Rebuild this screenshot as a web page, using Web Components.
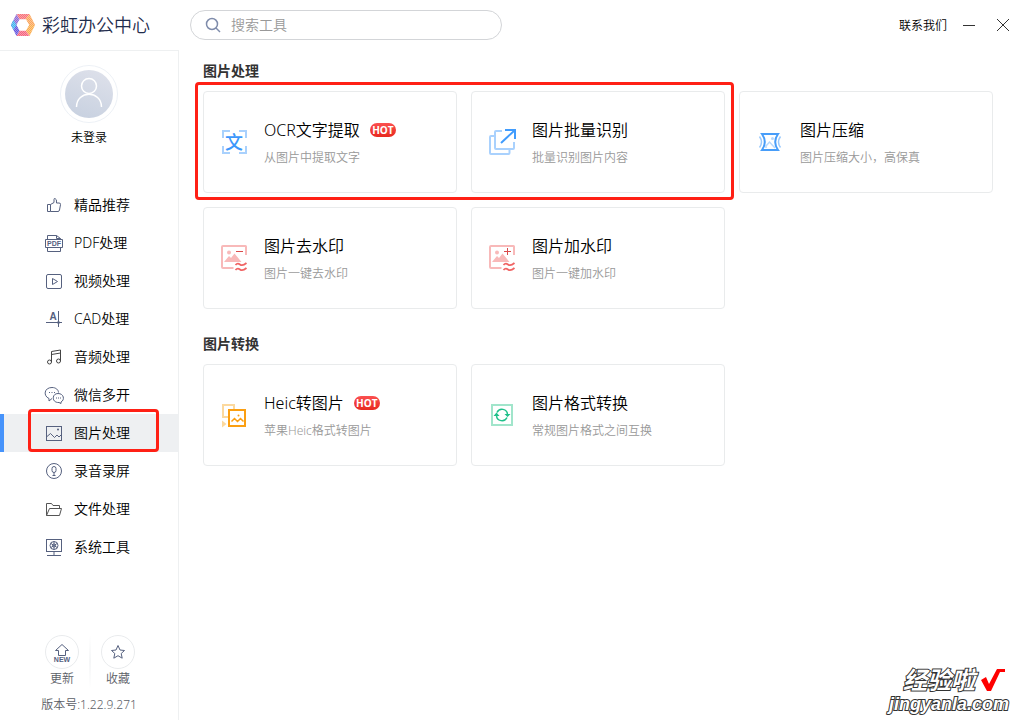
<!DOCTYPE html>
<html lang="zh-CN">
<head>
<meta charset="utf-8">
<meta name="viewport" content="width=device-width, initial-scale=1">
<title>彩虹办公中心</title>
<style>
html, body { margin: 0; background: #fff; }
body { font-family: "Noto Sans", "Noto Sans CJK SC", sans-serif; font-size: 14px; font-weight: 350; color: #000; }
</style>
</head>
<body>
<app-shell>
  <app-brand slot="brand">彩虹办公中心</app-brand>
  <app-toolbar slot="toolbar"></app-toolbar>
  <user-panel slot="side">未登录</user-panel>
  <side-nav slot="side">
    <nav-item icon="thumb">精品推荐</nav-item>
    <nav-item icon="pdf">PDF处理</nav-item>
    <nav-item icon="video">视频处理</nav-item>
    <nav-item icon="cad">CAD处理</nav-item>
    <nav-item icon="music">音频处理</nav-item>
    <nav-item icon="wechat">微信多开</nav-item>
    <nav-item icon="image" active marked>图片处理</nav-item>
    <nav-item icon="mic">录音录屏</nav-item>
    <nav-item icon="folder">文件处理</nav-item>
    <nav-item icon="system">系统工具</nav-item>
  </side-nav>
  <side-footer slot="side"></side-footer>
  <tool-section slot="main" heading="图片处理">
    <marked-group>
      <tool-card icon="ocr" hot desc="从图片中提取文字">OCR文字提取</tool-card>
      <tool-card icon="batch" desc="批量识别图片内容">图片批量识别</tool-card>
    </marked-group>
    <tool-card icon="compress" desc="图片压缩大小，高保真">图片压缩</tool-card>
    <tool-card icon="unmark" desc="图片一键去水印">图片去水印</tool-card>
    <tool-card icon="mark" desc="图片一键加水印">图片加水印</tool-card>
  </tool-section>
  <tool-section slot="main" heading="图片转换">
    <tool-card icon="heic" hot desc="苹果Heic格式转图片">Heic转图片</tool-card>
    <tool-card icon="convert" desc="常规图片格式之间互换">图片格式转换</tool-card>
  </tool-section>
  <site-stamp slot="stamp"></site-stamp>
</app-shell>

<script>
const NAV_ICONS = {
  thumb: '<path d="M3.5 9.5h3v7h-3zM6.5 9.5L10 7.5V4.5q0-1.2 1-1q2 .4 1.5 4.5H15q1.8 0 1.5 1.6l-1 5.4q-.3 1.5-1.5 1.5H6.5"/>',
  pdf: '<path d="M3.5 6.5V2.5H12.5L16.5 5.5V6.5M12.5 2.5v3h4M3.5 14.5v4h13v-4M1.5 6.5h17v8h-17z"/><text x="10" y="13" text-anchor="middle" font-size="7" font-weight="700">PDF</text>',
  video: '<rect x="2.5" y="3.5" width="15" height="14" rx="1.5"/><path d="M8.5 7.5v6l5-3z"/>',
  cad: '<path d="M2 13.5h16M14.5 2v16"/><circle cx="14.5" cy="13.5" r="1" class="f"/><text x="9" y="11" text-anchor="middle" font-size="10" font-weight="700">A</text>',
  music: '<g stroke="#444"><path d="M7.5 15V4.5l9-1.5v11M7.5 7.5l9-1.5"/><circle cx="5.5" cy="15" r="2"/><circle cx="14.5" cy="14" r="2"/></g>',
  wechat: '<path d="M8 13.5L5 16v-2.5C-1 11 0 2.5 8 2.5c4 0 6.5 2.5 6.5 5"/><path d="M14 8.5c6 0 7 6.5 3 8.5v1.5L15 17.5C7.5 18 7.5 8.5 14 8.5z"/><path d="M5 7.5h1M7.5 7.5h1M10 7.5h1M12 13h1M14 13h1M16 13h1"/>',
  image: '<rect x="2.5" y="3.5" width="15" height="14"/><path d="M3 13.5L6.5 10.5l4 4 2.5-2.5 2 2 2-2"/><circle cx="14" cy="6.5" r="1" class="f" stroke="none"/>',
  mic: '<circle cx="10" cy="10" r="7.5"/><rect x="8" y="5.5" width="4" height="6" rx="2"/><path d="M10 11.5v3M8.5 14.5h3"/>',
  folder: '<g stroke="#555"><path d="M2.5 16.5V4.5h5l1.5 2h6.5v3M2.5 16.5l3-7h12l-2 7z"/></g>',
  system: '<rect x="2.5" y="2.5" width="15" height="12"/><circle cx="10" cy="8.5" r="4"/><circle cx="10" cy="8.5" r="1.5"/><path d="M7 6.5l6 4M13 6.5l-6 4M10 4.5v2.5M10 10v2.5M10 14.5v4M3 18.5h14"/>'
};

const PICTURE = '<path d="M26 11V2.5Q26 2 25.5 2H3Q2 2 2 3V23Q2 24 3 24H13.5" stroke="#f8b9b9" stroke-width="2"/><circle cx="9" cy="8.5" r="2" fill="#f8b9b9"/><path d="M4 18l5-6 2 2 3.5-4.5L21.5 18z" fill="#f8b9b9"/><path d="M15.5 21q2-2.5 4.5-.5t6.5-1.5M15.5 26q2-2.5 4.5-.5t6.5-1.5" stroke="#f06464" stroke-width="1.7"/>';
const CARD_ICONS = {
  ocr: '<path d="M3 10V3h7M19 3h7v7M26 18v7h-7M10 25H3v-7" stroke="#a9d1fd" stroke-width="2"/><text x="14" y="21" text-anchor="middle" font-size="18" font-weight="500" fill="#3c97fb">文</text>',
  batch: '<path d="M6 8H3Q2 8 2 9V25Q2 26 3 26H20.5Q21.5 26 21.5 25V22M14 3H8Q7 3 7 4V20Q7 21 8 21H25Q26 21 26 20V14" stroke="#a9d1fd" stroke-width="2"/><path d="M17 2h10v9M27 2L13 15" stroke="#419cfd" stroke-width="2"/>',
  compress: '<path d="M10 20v-2l3.5-4 5.500 6" stroke="#b7d8fc" stroke-width="1.500"/><circle cx="16.5" cy="10.5" r="1.5" fill="#b7d8fc"/><path d="M3.5 8.5q4 5.5 0 11M24.5 8.5q-4 5.5 0 11" stroke="#9bc9fb" stroke-width="1.5"/><path d="M6 6H22C18.5 11 18.5 17 22 22H6C9.5 17 9.5 11 6 6z" stroke="#479df9" stroke-width="2"/>',
  unmark: PICTURE + '<path d="M16 7.5h7" stroke="#d94a4a"/>',
  mark: PICTURE + '<path d="M16 7.5h7M19.5 4v7" stroke="#d94a4a"/>',
  heic: '<path d="M8 16H3V4H14V8" stroke="#fcd99e" stroke-width="2"/><path d="M2 19.5v7l4.5-3.5z" fill="#fcd99e"/><rect x="9" y="9" width="16" height="16" stroke="#fb9f12" stroke-width="2"/><path d="M11.5 20.5l3-3 3 3 3-3 3 3" stroke="#fb9f12" stroke-width="1.5"/><circle cx="18.5" cy="14.5" r="1" fill="#fb9f12"/>',
  convert: '<rect x="4" y="4" width="20" height="20" stroke="#a1e5cb" stroke-width="2"/><path d="M9 11.5a5.5 5.5 0 0 1 10.5 2M19 16.5a5.5 5.5 0 0 1-10.5-2" stroke="#1fc08a" stroke-width="1.5"/><path d="M16.5 13h6l-3 3zM5.5 15h6l-3-3.5z" fill="#1fc08a"/>'
};

// Shared base: renders the markup returned by view() into an open shadow root.
class Base extends HTMLElement {
  connectedCallback() {
    if (this.shadowRoot) return;
    const t = document.createElement('template');
    t.innerHTML = this.view();
    this.attachShadow({ mode: 'open' }).append(t.content.cloneNode(true));
  }
}
const define = (name, view) => customElements.define(name, class extends Base { view() { return view(this); } });

define('app-shell', () => `
<style>
  :host { display: grid; position: relative; min-height: 100vh; grid-template-columns: 179px minmax(0, 1fr); grid-template-rows: 50px 1fr; }
  aside { display: flex; flex-direction: column; box-sizing: border-box; border-top: 1px solid #eef0f1; border-right: 1px solid #eef0f1; }
  main { display: flex; flex-direction: column; gap: 25px; padding: 11px 32px 24px 24px; }
</style>
<slot name="brand"></slot><slot name="toolbar"></slot>
<aside><slot name="side"></slot></aside>
<main><slot name="main"></slot></main>
<slot name="stamp"></slot>`);

define('app-brand', () => `
<style>
  :host { display: flex; align-items: center; gap: 6px; padding-left: 10px; font-size: 18px; line-height: 24px; color: #1f2d4d; }
  svg { width: 26px; height: 24px; }
</style>
<svg viewBox="0 0 26 24" aria-hidden="true">
  <defs><pattern id="p" width="2" height="2" patternUnits="userSpaceOnUse"><path d="M0 0h1v1H0zM1 1h1v1H1z" fill="#fff" opacity=".35"/></pattern></defs>
  <path d="M6.5 1h13l-4 5.5H9.5z" fill="#f8727a"/>
  <path d="M19.5 1L25 12h-6l-3.5-6z" fill="#fba65c"/>
  <path d="M25 12l-5.5 11-4-5.5L19 12z" fill="#fbad4e"/>
  <path d="M19.5 23h-13l3-5.5h6z" fill="#f5657f"/>
  <path d="M6.5 23L1 12h6l2.5 5.5z" fill="#6757df"/>
  <path d="M1 12L6.5 1l3 5.5L7 12z" fill="#8f6bd5"/>
  <path d="M1 12l2.5-5 3 5-3 5z" fill="#42b4ee"/>
  <path d="M6.5 1h13L25 12l-5.5 11h-13L1 12z" fill="url(#p)"/>
  <path d="M9.5 6.5h6.500L19 12l-3 5.5H9.5L6.5 12z" fill="#fff"/>
</svg><span><slot></slot></span>`);

define('app-toolbar', () => `
<style>
  :host { display: flex; align-items: center; padding: 0 16px 0 11px; }
  label { display: flex; align-items: center; gap: 10px; box-sizing: border-box; width: 312px; height: 30px; padding: 0 14px; border: 1px solid #d3d5d8; border-radius: 15px; }
  label svg { flex: none; width: 16px; height: 16px; }
  input { flex: 1; min-width: 0; padding: 0; border: 0; outline: 0; background: none; font: inherit; line-height: 20px; }
  input::placeholder { color: #999; opacity: 1; }
  nav { display: flex; align-items: center; gap: 16px; margin-left: auto; }
  a { padding-top: 2px; font-size: 12px; line-height: 20px; color: #000; text-decoration: none; }
  button { display: block; padding: 0; border: 0; background: none; width: 12px; height: 12px; }
  button + button { margin-left: 6px; }
  button svg { display: block; width: 12px; height: 12px; }
</style>
<label><svg viewBox="0 0 16 16" fill="none" stroke="#7f8cab" stroke-width="1.5" aria-hidden="true"><circle cx="7" cy="7" r="5.5"/><path d="M11 11l4 4"/></svg><input type="text" placeholder="搜索工具" aria-label="搜索工具"></label>
<nav><a href="#contact">联系我们</a>
<button aria-label="最小化"><svg viewBox="0 0 12 12" stroke="#333"><path d="M0 6.5h12"/></svg></button>
<button aria-label="关闭"><svg viewBox="0 0 12 12" stroke="#333"><path d="M0 0l12 12M12 0L0 12"/></svg></button></nav>`);

define('user-panel', () => `
<style>
  :host { display: flex; flex-direction: column; align-items: center; gap: 5px; padding: 14px 0 38px; font-size: 12px; line-height: 20px; }
  svg { width: 58px; height: 58px; }
</style>
<svg viewBox="0 0 58 58" fill="none" aria-hidden="true">
  <defs><linearGradient id="g" x1="0.7" y1="0" x2="0.3" y2="1"><stop offset="0" stop-color="#dde0ea"/><stop offset="1" stop-color="#c8d1e0"/></linearGradient></defs>
  <circle cx="29" cy="29" r="28.5" stroke="#edf1f6"/><circle cx="29" cy="29" r="24" fill="url(#g)"/>
  <circle cx="29" cy="21" r="7.5" stroke="#fff" stroke-width="1.5"/><path d="M16.5 42c0-17 25-17 25 0" stroke="#fff" stroke-width="1.5"/>
</svg><span><slot></slot></span>`);

define('side-nav', () => `<style>:host { display: block; } nav { display: flex; flex-direction: column; }</style><nav><slot></slot></nav>`);

define('marked-group', () => `
<style>
  :host { display: grid; position: relative; grid-column: span 2; grid-template-columns: repeat(2, minmax(0, 1fr)); gap: 14px; }
  :host::after { content: ""; position: absolute; inset: -9px -9px -7px -8px; border: 3px solid #ff2015; border-radius: 4px; pointer-events: none; }
</style><slot></slot>`);

define('nav-item', el => `
<style>
  :host { display: block; position: relative; }
  a { display: flex; align-items: center; gap: 10px; box-sizing: border-box; height: 38px; padding-left: 40px; border-left: 4px solid transparent; color: #000; line-height: 20px; text-decoration: none; }
  :host([active]) a { background: #eef0f2; border-color: #4693fb; }
  svg { width: 20px; height: 20px; fill: none; stroke: #56617f; }
  text { fill: #56617f; stroke: none; font-family: "Liberation Sans", sans-serif; }
  .f { fill: #56617f; }
  :host([marked])::after { content: ""; position: absolute; inset: -5px 19px 0 28px; border: 3px solid #ff2015; border-radius: 4px; pointer-events: none; }
</style>
<a href="#${el.getAttribute('icon')}"><svg viewBox="0 0 20 20" aria-hidden="true">${NAV_ICONS[el.getAttribute('icon')]}</svg><span><slot></slot></span></a>`);

define('side-footer', () => `
<style>
  :host { display: block; margin-top: auto; padding: 16px 0 5px; font-size: 12px; line-height: 20px; color: #5b5e66; text-align: center; }
  div { display: flex; justify-content: center; gap: 10px; padding-left: 2px; }
  button { display: flex; flex-direction: column; align-items: center; padding: 0; border: 0; width: 34px; background: none; font: inherit; color: inherit; }
  svg { width: 34px; height: 34px; fill: none; stroke: #56617f; }
  text { fill: #56617f; stroke: none; font: 700 7px "Liberation Sans", sans-serif; }
  i { width: 2px; background: linear-gradient(#fff, #f5f6f7, #fff); }
  p { margin: 6px 0 0; }
</style>
<div>
  <button><svg viewBox="0 0 34 34" aria-hidden="true"><circle cx="17" cy="17" r="16.5" stroke="#e9ebed"/><path d="M17 9.5l-6.5 6h3v5h7v-5h3z"/><text x="17" y="27" text-anchor="middle">NEW</text></svg>更新</button>
  <i></i>
  <button><svg viewBox="0 0 34 34" aria-hidden="true"><circle cx="17" cy="17" r="16.5" stroke="#e9ebed"/><path d="M17 10.5l2 4.5 4.5.5-3.3 3 1 4.7-4.2-2.5-4.2 2.5 1-4.7-3.3-3 4.5-.5z"/></svg>收藏</button>
</div>
<p>版本号:1.22.9.271</p>`);

define('tool-section', el => `
<style>
  :host { display: block; }
  h2 { margin: 0 0 10px; font-size: 14px; line-height: 20px; font-weight: 700; color: #333; }
  div { display: grid; grid-template-columns: repeat(3, minmax(0, 1fr)); gap: 14px; }
</style>
<h2>${el.getAttribute('heading')}</h2><div><slot></slot></div>`);

define('tool-card', el => `
<style>
  :host { display: block; }
  a { display: flex; align-items: center; gap: 16px; box-sizing: border-box; height: 102px; padding: 0 16px; border: 1px solid #e9ebec; border-radius: 4px; color: #000; text-decoration: none; }
  svg { flex: none; width: 28px; height: 28px; fill: none; }
  svg text { font-family: "Noto Sans CJK SC", sans-serif; }
  div { padding-top: 2px; }
  h3 { display: flex; align-items: center; gap: 10px; margin: 0 0 6px; font-size: 16px; font-weight: inherit; line-height: 24px; white-space: nowrap; }
  p { margin: 0; font-size: 12px; line-height: 20px; color: #999; white-space: nowrap; }
  b { width: 26px; height: 14px; border-radius: 7px; background: linear-gradient(#fb5050, #e8291f); color: #fff; font: 700 10px/14px "Open Sans", sans-serif; text-align: center; }
</style>
<a href="#${el.getAttribute('icon')}"><svg viewBox="0 0 28 28" aria-hidden="true">${CARD_ICONS[el.getAttribute('icon')]}</svg>
<div><h3><span><slot></slot></span>${el.hasAttribute('hot') ? '<b>HOT</b>' : ''}</h3><p>${el.getAttribute('desc')}</p></div></a>`);

define('site-stamp', () => `
<style>
  :host { position: absolute; right: 16px; bottom: 6px; display: flex; flex-direction: column; align-items: flex-end; font-family: "Liberation Sans", "Noto Sans CJK SC", sans-serif; color: #fff; font-style: italic; font-weight: 700; -webkit-text-stroke: 2px #333; paint-order: stroke fill; pointer-events: none; }
  div { display: flex; gap: 6px; padding-right: 4px; font-size: 24px; line-height: 26px; }
  svg { width: 24px; height: 24px; }
  p { margin: 0; font-size: 18px; line-height: 20px; }
</style>
<div><span>经验啦</span><svg viewBox="0 0 24 24" aria-hidden="true"><path d="M0 12l5-3 3 7L16 1h8v3h-5l-9 19H6z" fill="#fe0000"/></svg></div>
<p>jingyanla.com</p>`);
</script>
</body>
</html>
